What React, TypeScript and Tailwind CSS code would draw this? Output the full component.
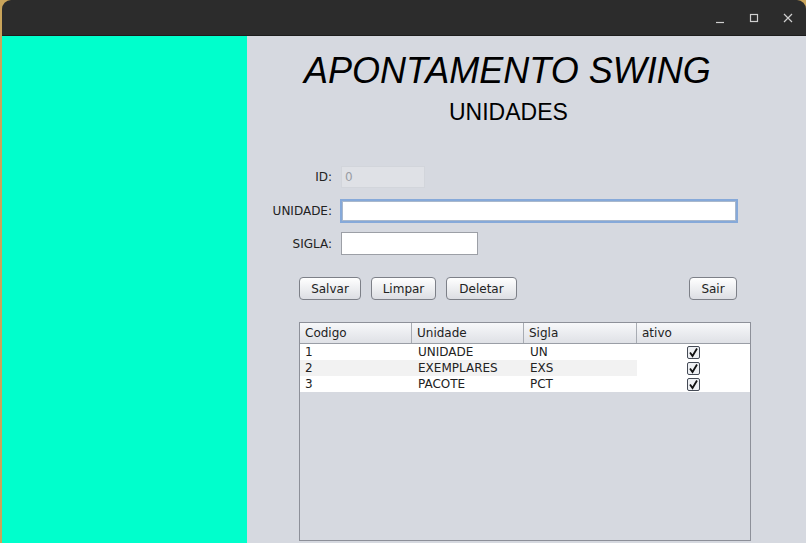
import React from "react"

const rows = [
  { codigo: "1", unidade: "UNIDADE", sigla: "UN" },
  { codigo: "2", unidade: "EXEMPLARES", sigla: "EXS" },
  { codigo: "3", unidade: "PACOTE", sigla: "PCT" },
]

const ui = "font-['DejaVu_Sans',sans-serif] text-[12px] text-[#222]"

function Checked() {
  return (
    <svg width="13" height="13" viewBox="0 0 13 13">
      <rect x="0.5" y="0.5" width="12" height="12" rx="1.5" fill="#eef0f3" stroke="#444a55" />
      <path d="M3 6.5 L5.5 10 L10 2.5" fill="none" stroke="#111" strokeWidth="1.8" />
    </svg>
  )
}

function SwingButton({ label, className = "" }: { label: string; className?: string }) {
  return (
    <button
      className={`h-[23px] rounded-[4px] border border-[#7d8088] bg-gradient-to-b from-white to-[#dcdee3] ${ui} ${className}`}
    >
      {label}
    </button>
  )
}

export default function App() {
  return (
    <div className="w-[806px] h-[543px] bg-[#c9a45a] overflow-hidden">
      <div className="ml-[2px] h-full flex flex-col rounded-t-[9px] overflow-hidden">
        {/* title bar */}
        <div className="h-[36px] shrink-0 bg-[#2c2c2c] border-b border-[#1d1d1d] flex items-center justify-end pr-[12px] gap-[22px]">
          <svg width="12" height="12" viewBox="0 0 12 12">
            <path d="M2 10.5 H10" stroke="#cfcfcf" strokeWidth="1.2" />
          </svg>
          <svg width="12" height="12" viewBox="0 0 12 12">
            <rect x="2.5" y="2.5" width="7" height="7" fill="none" stroke="#cfcfcf" strokeWidth="1.2" />
          </svg>
          <svg width="12" height="12" viewBox="0 0 12 12">
            <path d="M2 2 L10 10 M10 2 L2 10" stroke="#cfcfcf" strokeWidth="1.2" />
          </svg>
        </div>

        <div className="flex flex-1 min-h-0">
          <div className="w-[245px] shrink-0 bg-[#00ffcc]" />

          <div className="flex-1 bg-[#d6d9e0] flex flex-col">
            <h1 className="ml-[57px] mt-[15px] leading-[40px] text-[36px] italic text-black font-['Liberation_Sans',Arial,sans-serif] whitespace-nowrap">
              APONTAMENTO SWING
            </h1>
            <h2 className="ml-[202px] mt-[7px] leading-[28px] text-[23px] text-black font-['Liberation_Sans',Arial,sans-serif]">
              UNIDADES
            </h2>

            {/* form */}
            <div className={`mt-[40px] flex flex-col ${ui}`}>
              <div className="flex items-center h-[22px]">
                <span className="w-[85px] text-right">ID:</span>
                <div className="ml-[9px] w-[84px] h-[22px] border border-[#d2d5db] bg-[#dfe1e6] px-[3px] flex items-center text-[#9a9da4]">
                  0
                </div>
              </div>
              <div className="flex items-center h-[24px] mt-[11px]">
                <span className="w-[85px] text-right">UNIDADE:</span>
                <div className="ml-[8px] w-[398px] h-[24px] border-2 border-[#86a9d9] bg-white shadow-[inset_0_0_0_1px_#a9b8cc]" />
              </div>
              <div className="flex items-center h-[23px] mt-[9px]">
                <span className="w-[85px] text-right">SIGLA:</span>
                <div className="ml-[9px] w-[137px] h-[23px] border border-[#9c9fa6] bg-white" />
              </div>
            </div>

            {/* buttons */}
            <div className="mt-[22px] ml-[52px] mr-[69px] flex items-center">
              <SwingButton label="Salvar" className="w-[62px]" />
              <SwingButton label="Limpar" className="w-[65px] ml-[10px]" />
              <SwingButton label="Deletar" className="w-[71px] ml-[10px]" />
              <SwingButton label="Sair" className="w-[48px] ml-auto" />
            </div>

            {/* table */}
            <div className={`mt-[22px] ml-[52px] w-[452px] h-[219px] border border-[#8d9099] flex flex-col ${ui}`}>
              <div className="h-[21px] flex border-b border-[#9a9ea6] bg-gradient-to-b from-[#f7f8fa] to-[#dfe1e6]">
                <div className="w-[112px] pl-[5px] flex items-center border-r border-[#a8acb3]">Codigo</div>
                <div className="w-[112px] pl-[5px] flex items-center border-r border-[#a8acb3]">Unidade</div>
                <div className="w-[113px] pl-[5px] flex items-center border-r border-[#a8acb3]">Sigla</div>
                <div className="flex-1 pl-[5px] flex items-center">ativo</div>
              </div>
              {rows.map((r, i) => (
                <div key={r.codigo} className="h-[16px] flex bg-white">
                  <div className={`w-[337px] flex ${i === 1 ? "bg-[#f2f2f2]" : "bg-white"}`}>
                    <div className="w-[112px] pl-[5px] leading-[16px]">{r.codigo}</div>
                    <div className="w-[112px] pl-[6px] leading-[16px]">{r.unidade}</div>
                    <div className="w-[113px] pl-[6px] leading-[16px]">{r.sigla}</div>
                  </div>
                  <div className="flex-1 flex items-center justify-center pr-[1px]">
                    <Checked />
                  </div>
                </div>
              ))}
            </div>
          </div>
        </div>
      </div>
    </div>
  )
}
